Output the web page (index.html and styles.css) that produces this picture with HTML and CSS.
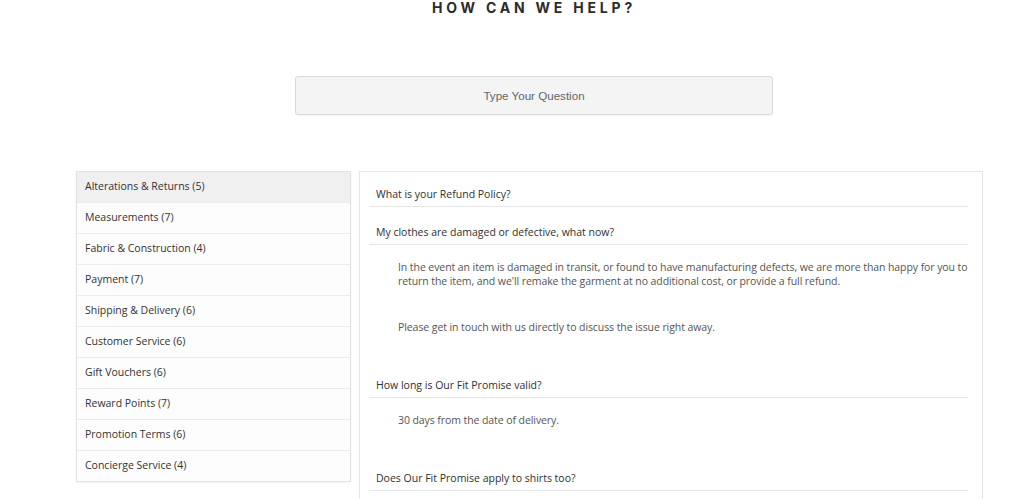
FILE: index.html
```html
<!DOCTYPE html>
<html>
<head>
<meta charset="utf-8">
<link rel="stylesheet" href="styles.css">
</head>
<body>
<div class="page">
  <h1 class="title">HOW CAN WE HELP?</h1>
  <div class="search">
    <input class="search-input" type="text" placeholder="Type Your Question">
  </div>
  <div class="columns">
    <ul class="cats">
      <li class="cat active">Alterations &amp; Returns (5)</li>
      <li class="cat">Measurements (7)</li>
      <li class="cat">Fabric &amp; Construction (4)</li>
      <li class="cat">Payment (7)</li>
      <li class="cat">Shipping &amp; Delivery (6)</li>
      <li class="cat">Customer Service (6)</li>
      <li class="cat">Gift Vouchers (6)</li>
      <li class="cat">Reward Points (7)</li>
      <li class="cat">Promotion Terms (6)</li>
      <li class="cat">Concierge Service (4)</li>
    </ul>
    <div class="faq">
      <div class="q first">What is your Refund Policy?</div>
      <div class="q">My clothes are damaged or defective, what now?</div>
      <div class="a">
        <p>In the event an item is damaged in transit, or found to have manufacturing defects, we are more than happy for you to return the item, and we'll remake the garment at no additional cost, or provide a full refund.</p>
        <p>Please get in touch with us directly to discuss the issue right away.</p>
      </div>
      <div class="q">How long is Our Fit Promise valid?</div>
      <div class="a">
        <p>30 days from the date of delivery.</p>
      </div>
      <div class="q">Does Our Fit Promise apply to shirts too?</div>
    </div>
  </div>
</div>
</body>
</html>
```

FILE: styles.css
```css
* { box-sizing: border-box; }
html, body { margin: 0; padding: 0; background: #fff; }
body { font-family: "Open Sans", "Noto Sans", sans-serif; color: #333; overflow: hidden; }
.page { padding-left: 44px; }
.title {
  margin: 0;
  padding-top: 0;
  text-align: center;
  font-family: "Inter", "DejaVu Sans", sans-serif;
  font-weight: 700;
  font-size: 14px;
  line-height: 16px;
  letter-spacing: 3.8px;
  color: #2b2b2b;
}
.search { display: flex; justify-content: center; margin-top: 60px; }
.search-input {
  width: 478px;
  height: 39px;
  border: 1px solid #d9d9d9;
  border-radius: 3px;
  background: #f4f4f4;
  text-align: center;
  font-family: "Liberation Sans", Arial, sans-serif;
  font-size: 11.6px;
  color: #555;
  outline: none;
  box-shadow: 0 1px 1px rgba(0,0,0,0.04);
}
.search-input::placeholder { color: #666; }
.columns { display: flex; gap: 8px; margin-top: 56px; margin-left: 32px; width: 907px; align-items: flex-start; }
.cats {
  list-style: none;
  margin: 0;
  padding: 0;
  width: 275px;
  flex: none;
  border: 1px solid #e2e2e2;
  box-shadow: 0 1px 2px rgba(0,0,0,0.05);
  background: #fdfdfd;
}
.cat {
  height: 31px;
  line-height: 29px;
  padding-left: 8px;
  font-size: 10.5px;
  color: #333;
  border-bottom: 1px solid #ececec;
}
.cat:last-child { border-bottom: 0; height: 30px; }
.cat.active { background: #f0f0f0; }
.faq {
  flex: 1;
  min-height: 400px;
  border: 1px solid #e6e6e6;
  padding: 0 14px 0 9px;
}
.q {
  padding: 17px 0 4px 7px;
  font-size: 10.5px;
  line-height: 16px;
  color: #2f2f2f;
  border-bottom: 1px solid #e6e6e6;
}
.q.first { padding-top: 14px; }
.a { padding: 15px 0 26px 29px; font-size: 10.5px; line-height: 14px; color: #555; letter-spacing: -0.08px; }
.a p { margin: 0 0 32px; }
.a p:last-child { margin-bottom: 0; }
```
